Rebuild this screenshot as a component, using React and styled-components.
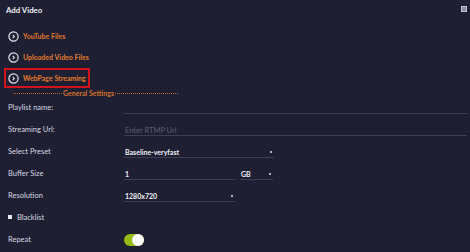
import React from "react";
import styled, { createGlobalStyle } from "styled-components";

const Global = createGlobalStyle`
  html, body { margin: 0; padding: 0; background: #1e1f33; overflow: hidden; }
  body { font-family: Lato, "Open Sans", "Liberation Sans", sans-serif; }
`;

const Page = styled.div`
  width: 470px;
  height: 252px;
  background: #1e1f33;
  overflow: hidden;
`;

const Header = styled.div`
  height: 20px;
  display: grid;
  grid-template-columns: 1fr 6px;
  align-items: center;
  padding: 0 3px 0 6px;
`;

const Title = styled.div`
  color: #f0f0f5;
  font-size: 7.8px;
  font-weight: 700;
`;

const Close = styled.div`
  width: 4px;
  height: 4px;
  background: #8a8ca0;
  border: 1px solid #c0c2d0;
  margin-top: -3px;
`;

const Links = styled.div`
  display: flex;
  flex-direction: column;
  align-items: flex-start;
  padding: 6px 0 0 4px;
`;

const LinkRow = styled.div`
  height: 20px;
  width: ${(p) => (p.$boxed ? "86px" : "auto")};
  display: flex;
  align-items: center;
  gap: 4px;
  padding-left: 2px;
  box-sizing: border-box;
  white-space: nowrap;
  border: 2px solid ${(p) => (p.$boxed ? "#d0151f" : "transparent")};
  margin-bottom: ${(p) => (p.$boxed ? "0" : "1px")};
`;

const LinkText = styled.span`
  color: #e07a2c;
  font-size: 7px;
  font-weight: 700;
`;

const Divider = styled.div`
  display: flex;
  align-items: center;
  padding-left: 13px;
  height: 8px;
  margin-top: 1px;
`;

const Dots = styled.span`
  width: ${(p) => p.$w}px;
  height: 0;
  border-top: 1.5px dotted #c0642a;
`;

const DividerText = styled.span`
  color: #d2702c;
  font-size: 7px;
  font-weight: 700;
  line-height: 8px;
  padding: 0 1px;
`;

const Form = styled.div`
  display: grid;
  grid-template-columns: 116px 1fr;
  padding: 0 3px 0 8px;
  margin-top: -1px;
`;

const Label = styled.div`
  color: #d8d8e2;
  font-size: 7.5px;
  height: 22px;
  display: flex;
  align-items: center;
`;

const Field = styled.div`
  height: 22px;
  display: flex;
  align-items: center;
  gap: 5px;
`;

const Input = styled.div`
  width: ${(p) => p.$w || "100%"};
  height: 9px;
  border-bottom: 1.5px solid #3c3e52;
  display: flex;
  align-items: center;
  justify-content: space-between;
  padding: 0 2px 0 1px;
  box-sizing: content-box;
  margin-top: 3px;
  color: ${(p) => (p.$ph ? "#5e6074" : "#f0f0f5")};
  font-size: ${(p) => (p.$ph ? "7.5px" : "7px")};
  font-weight: ${(p) => (p.$ph ? 400 : 700)};
`;

const Caret = styled.span`
  width: 2px;
  height: 2px;
  background: #e8e8f0;
  border-radius: 1px;
`;

const CheckLabel = styled(Label)`
  gap: 5px;
  grid-column: 1 / 3;
`;

const Box = styled.span`
  width: 4px;
  height: 4px;
  background: #e8e8f0;
  margin-top: -1px;
`;

const Toggle = styled.div`
  width: 20px;
  height: 12px;
  border-radius: 6px;
  background: #95bb14;
  position: relative;
  margin-top: 1px;
  &::after {
    content: "";
    position: absolute;
    right: 0;
    top: 0;
    width: 12px;
    height: 12px;
    border-radius: 50%;
    background: #fbfbfb;
  }
`;

const Chevron = () => (
  <svg width="11" height="11" viewBox="0 0 11 11">
    <circle cx="5.5" cy="5.5" r="4.6" fill="none" stroke="#e6e6ee" strokeWidth="1.2" />
    <path d="M4.8 3.9 L6.3 5.5 L4.8 7.1" fill="none" stroke="#e6e6ee" strokeWidth="1.1" />
  </svg>
);

export default function App() {
  return (
    <>
      <Global />
      <Page>
        <Header>
          <Title>Add Video</Title>
          <Close />
        </Header>
        <Links>
          <LinkRow>
            <Chevron />
            <LinkText>YouTube Files</LinkText>
          </LinkRow>
          <LinkRow>
            <Chevron />
            <LinkText>Uploaded Video Files</LinkText>
          </LinkRow>
          <LinkRow $boxed>
            <Chevron />
            <LinkText>WebPage Streaming</LinkText>
          </LinkRow>
        </Links>
        <Divider>
          <Dots $w={49} />
          <DividerText>General Settings</DividerText>
          <Dots $w={63} />
        </Divider>
        <Form>
          <Label>Playlist name:</Label>
          <Field>
            <Input />
          </Field>
          <Label>Streaming Url:</Label>
          <Field>
            <Input $ph>Enter RTMP Url</Input>
          </Field>
          <Label>Select Preset</Label>
          <Field>
            <Input $w="147px">
              Baseline-veryfast
              <Caret />
            </Input>
          </Field>
          <Label>Buffer Size</Label>
          <Field>
            <Input $w="108px">1</Input>
            <Input $w="30px">
              GB
              <Caret />
            </Input>
          </Field>
          <Label>Resolution</Label>
          <Field>
            <Input $w="108px">
              1280x720
              <Caret />
            </Input>
          </Field>
          <CheckLabel>
            <Box />
            Blacklist
          </CheckLabel>
          <Label>Repeat</Label>
          <Field>
            <Toggle />
          </Field>
        </Form>
      </Page>
    </>
  );
}
